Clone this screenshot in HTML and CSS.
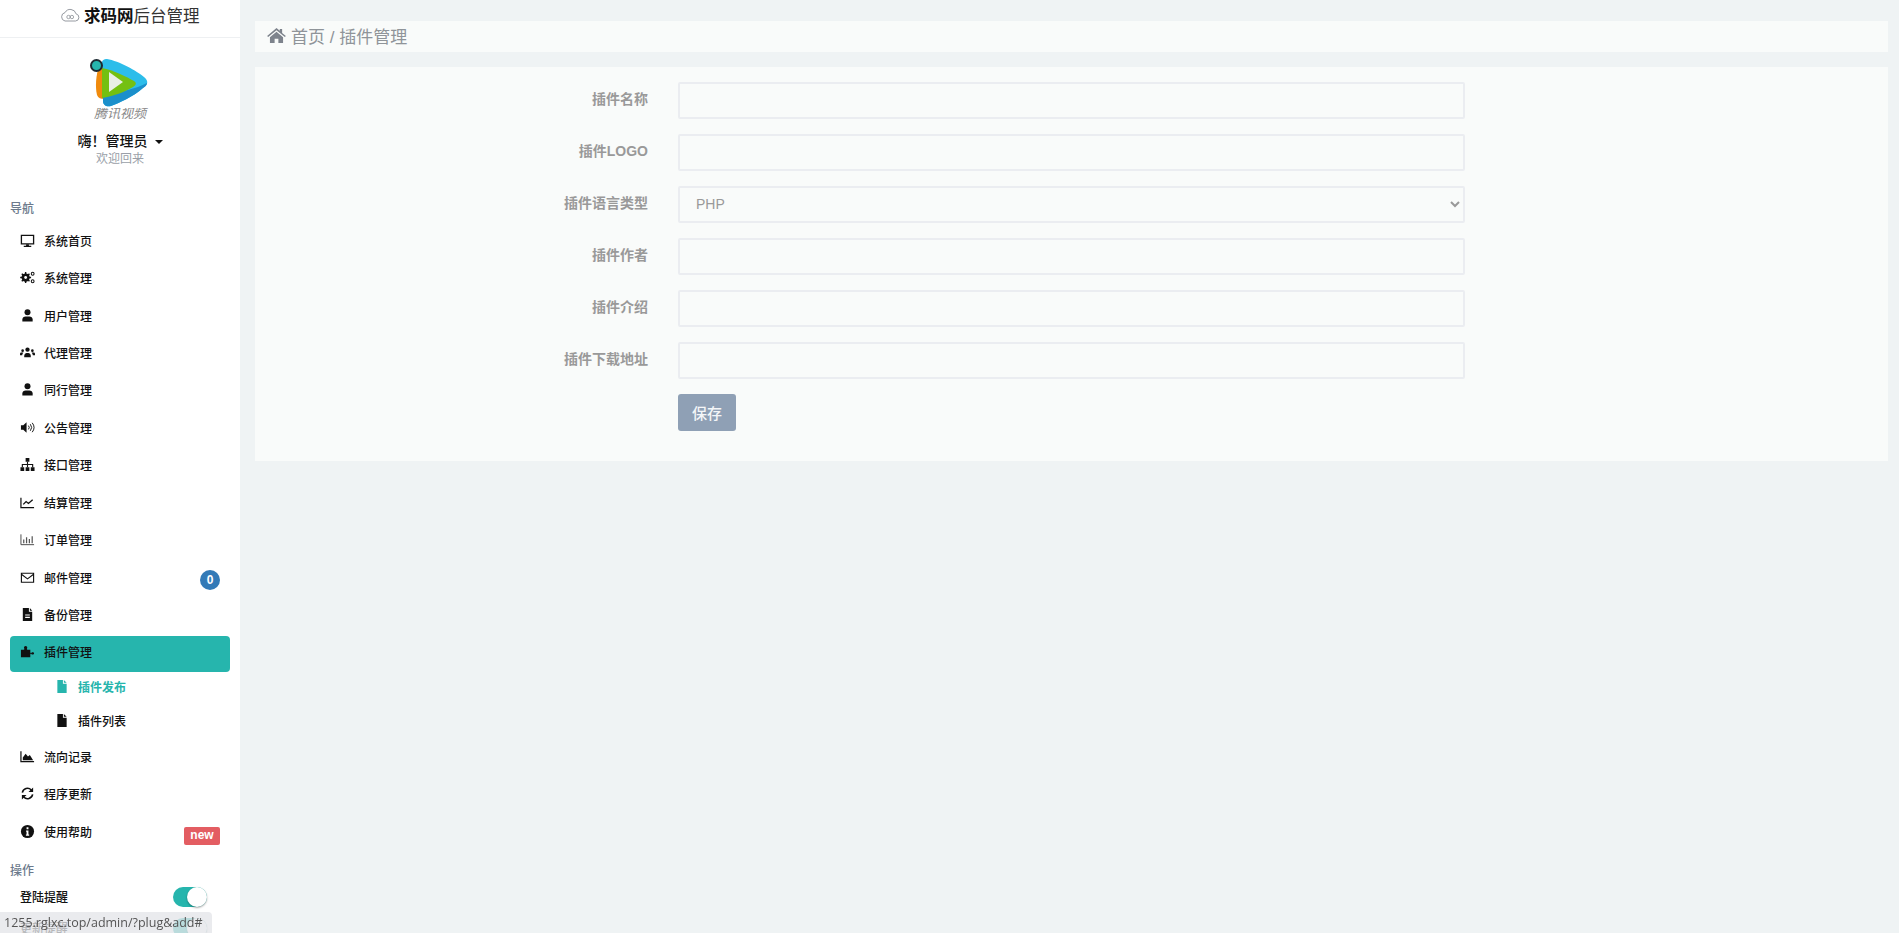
FILE: index.html
```html
<!DOCTYPE html>
<html lang="zh-CN">
<head>
    <meta charset="UTF-8">
    <title>求码网后台管理</title>
    <link rel="stylesheet" href="styles.css">
</head>
<body>

    <div class="layout">

        <!-- Sidebar -->
        <aside class="sidebar">
            <div class="brand">
                <svg class="brand-icon" viewBox="0 0 20 14"><path d="M5 13h10.500a3.600 3.600 0 0 0 .6-7.100A6 6 0 0 0 5 4.600 4.300 4.300 0 0 0 5 13z" fill="none" stroke="#8a8f96" stroke-width="0.9"/><circle cx="8.500" cy="9" r="1.700" fill="none" stroke="#8a8f96" stroke-width="0.8"/><circle cx="11.900" cy="9" r="1.700" fill="none" stroke="#8a8f96" stroke-width="0.8"/></svg>
                <b>求码网</b><span>后台管理</span>
            </div>

            <div class="profile">
                <div class="avatar">
                    <svg viewBox="0 0 62 50" class="avatar-logo">
                        <path d="M10 9C7 18 6 30 8 38c1 3 4 4 7 4L14 8z" fill="#f08a0c"/>
                        <path d="M18 2c12 2 30 12 37 18 5 4 4 8-1 11-10 9-24 15-32 18-5 1-8-1-8-5L13 6c0-3 2-4 5-4z" fill="#2cbdea"/>
                        <path d="M14 36v8c0 4 3 6 8 5 8-3 22-9 32-18 2-1 4-3 4-5-12 6-30 11-44 10z" fill="#1b8fcb"/>
                        <path d="M13 11c11 2 25 9 32 13 3 2 2 4-1 6-8 5-20 9-31 11z" fill="#74c011"/>
                        <path d="M20 15l14 10-14 10z" fill="#e9efe6"/>
                    </svg>
                    <span class="avatar-name">腾讯视频</span>
                    <span class="online-dot"></span>
                </div>
                <div class="profile-name">嗨！管理员<i class="caret"></i></div>
                <div class="profile-sub">欢迎回来</div>
            </div>

            <div class="nav-title">导航</div>
            <ul class="nav">
                <li class="nav-item"><svg class="ico" viewBox="0 0 16 16"><path d="M1.500 2.500h13v9h-13z" fill="none" stroke="#111" stroke-width="1.400"/><path d="M6.500 12h3v1.500H12V15H4v-1.500h2.500z" fill="#111"/></svg>系统首页</li>
                <li class="nav-item"><svg class="ico" viewBox="0 0 16 16"><circle cx="6" cy="8" r="3.200" fill="none" stroke="#111" stroke-width="2.400"/><path d="M6 2.200v11.600M.2 8h11.600M1.900 3.900l8.200 8.200M10.100 3.900l-8.200 8.200" stroke="#111" stroke-width="1.500"/><circle cx="6" cy="8" r="1.500" fill="#fff"/><circle cx="13.500" cy="4" r="1.500" fill="none" stroke="#111" stroke-width="1.100"/><circle cx="13.500" cy="12" r="1.500" fill="none" stroke="#111" stroke-width="1.100"/></svg>系统管理</li>
                <li class="nav-item"><svg class="ico" viewBox="0 0 16 16"><circle cx="8" cy="4.500" r="3.200" fill="#111"/><path d="M2.500 14.500v-2.200c0-2 1.600-3.300 3.500-3.300h4c1.900 0 3.500 1.300 3.500 3.300v2.200z" fill="#111"/></svg>用户管理</li>
                <li class="nav-item"><svg class="ico" viewBox="0 0 16 16"><circle cx="8" cy="5" r="2.300" fill="#111"/><path d="M4.500 13v-1.500C4.500 9.800 6 8.500 7 8.500h2c1 0 2.500 1.300 2.500 3V13z" fill="#111"/><circle cx="2.800" cy="6" r="1.400" fill="#111"/><circle cx="13.200" cy="6" r="1.400" fill="#111"/><path d="M0 11V9.500C0 8.500.8 8 1.600 8h2c-.8 1-1.300 2-1.300 3zM16 11V9.500c0-1-.8-1.500-1.600-1.500h-2c.8 1 1.300 2 1.300 3z" fill="#111"/></svg>代理管理</li>
                <li class="nav-item"><svg class="ico" viewBox="0 0 16 16"><circle cx="8" cy="4.500" r="3.200" fill="#111"/><path d="M2.500 14.500v-2.200c0-2 1.600-3.300 3.500-3.300h4c1.900 0 3.500 1.300 3.500 3.300v2.200z" fill="#111"/></svg>同行管理</li>
                <li class="nav-item"><svg class="ico" viewBox="0 0 16 16"><path d="M1 5.500h2.500L7 2.500v11l-3.500-3H1z" fill="#111"/><path d="M9 6a3 3 0 0 1 0 4M11 4.500a5.500 5.500 0 0 1 0 7M13 3a8 8 0 0 1 0 10" fill="none" stroke="#111" stroke-width="1"/></svg>公告管理</li>
                <li class="nav-item"><svg class="ico" viewBox="0 0 16 16"><path d="M6 1h4v4H6zM.5 11h4v4h-4zM6 11h4v4H6zM11.500 11h4v4h-4z" fill="#111"/><path d="M8 5v6M2.500 11V8h11v3" fill="none" stroke="#111" stroke-width="1.200"/></svg>接口管理</li>
                <li class="nav-item"><svg class="ico" viewBox="0 0 16 16"><path d="M1 3v10.500h14" fill="none" stroke="#111" stroke-width="1.300"/><path d="M3.500 10l3-3 2.500 2 4.500-4" fill="none" stroke="#111" stroke-width="1.400"/></svg>结算管理</li>
                <li class="nav-item"><svg class="ico" viewBox="0 0 16 16"><path d="M1 2.500v11h14" fill="none" stroke="#444" stroke-width="1"/><path d="M4 8v4M7 5.500V12M10 7.500V12M13 4.500V12" stroke="#555" stroke-width="1.300"/></svg>订单管理</li>
                <li class="nav-item"><svg class="ico" viewBox="0 0 16 16"><path d="M1.500 3.500h13v9.500h-13z" fill="none" stroke="#111" stroke-width="1.200"/><path d="M1.500 4.500L8 9.500l6.500-5" fill="none" stroke="#111" stroke-width="1.200"/></svg>邮件管理<span class="badge-count">0</span></li>
                <li class="nav-item"><svg class="ico" viewBox="0 0 16 16"><path d="M3 1h6.500v4H13v10H3z" fill="#111"/><path d="M10.500 1L13 4h-2.500z" fill="#111"/><path d="M5.500 8h5v1.100h-5zM5.500 10.500h5v1.100h-5z" fill="#fff"/></svg>备份管理</li>
                <li class="nav-item active"><svg class="ico" viewBox="0 0 16 16"><path d="M1 6h3c.8 0 .8-1 .4-1.500C3.800 3.500 4.800 2 6 2s2.200 1.500 1.600 2.500C7.200 5 7.200 6 8 6h3v3c0 .6.800.6 1.300.2.800-.6 2.700-.4 2.700.8s-1.900 1.400-2.700.8c-.5-.4-1.300-.4-1.300.2v3H1z" fill="#111"/></svg>插件管理</li>
                <li class="sub-item current"><svg class="ico-sub" viewBox="0 0 12 14"><path d="M1 0h6v4h4v10H1zM8 0l3 3H8z" fill="#26b5ad"/></svg>插件发布</li>
                <li class="sub-item"><svg class="ico-sub" viewBox="0 0 12 14"><path d="M1 0h6v4h4v10H1zM8 0l3 3H8z" fill="#111"/></svg>插件列表</li>
                <li class="nav-item"><svg class="ico" viewBox="0 0 16 16"><path d="M1 2.500v11h14" fill="none" stroke="#111" stroke-width="1.300"/><path d="M3 12V9l3-4 2.500 3 2-1.500L14 12z" fill="#111"/></svg>流向记录</li>
                <li class="nav-item"><svg class="ico" viewBox="0 0 16 16"><path d="M2.500 7A5.600 5.600 0 0 1 12 4.200M13.500 9A5.600 5.600 0 0 1 4 11.800" fill="none" stroke="#111" stroke-width="1.700"/><path d="M14 1.500V6.500H9zM2 14.500V9.500H7z" fill="#111"/></svg>程序更新</li>
                <li class="nav-item"><svg class="ico" viewBox="0 0 16 16"><circle cx="8" cy="8" r="7" fill="#111"/><path d="M7 3.500h2v2H7zM6.500 7H9v4.200h.8v1.300H6.300v-1.300H7V8.300h-.5z" fill="#fff"/></svg>使用帮助<span class="badge-new">new</span></li>
            </ul>

            <div class="nav-title action-title">操作</div>
            <div class="switch-row">登陆提醒<span class="switch"></span></div>
            <div class="switch-row">更新提醒<span class="switch"></span></div>
        </aside>

        <!-- Main content -->
        <main class="content">
            <div class="crumb">
                <svg class="crumb-icon" viewBox="0 0 20 16"><path d="M10 0l3.500 3V1h2.500v4.200L20 8.600l-1.100 1.100L10 2.300 1.100 9.700 0 8.600z" fill="#7d838c"/><path d="M10 4l7 5.800V16h-5v-4.500H8V16H3V9.800z" fill="#7d838c"/></svg>
                首页 / 插件管理
            </div>

            <form class="card">
                <div class="form-row"><label>插件名称</label><input type="text"></div>
                <div class="form-row"><label>插件LOGO</label><input type="text"></div>
                <div class="form-row"><label>插件语言类型</label><select><option>PHP</option></select></div>
                <div class="form-row"><label>插件作者</label><input type="text"></div>
                <div class="form-row"><label>插件介绍</label><input type="text"></div>
                <div class="form-row"><label>插件下载地址</label><input type="text"></div>
                <div class="form-row"><label></label><button type="button">保存</button></div>
            </form>
        </main>

    </div>

    <!-- Browser link preview -->
    <div class="status-bubble">1255.rglxc.top/admin/?plug&amp;add#</div>

</body>
</html>
```

FILE: styles.css
```css
/* Basic Reset and Global Styles */
* {
    box-sizing: border-box;
    margin: 0;
    padding: 0;
}

html, body {
    height: 100%;
    overflow: hidden;
}

body {
    font-family: "Liberation Sans", "Noto Sans CJK SC", sans-serif;
    background-color: #eff3f4;
    color: #111;
}

.layout {
    display: flex;
    height: 933px;
}

/* Sidebar */
.sidebar {
    width: 240px;
    flex-shrink: 0;
    height: 933px;
    overflow: hidden;
    background-color: #fff;
}

.brand {
    height: 38px;
    padding-left: 60px;
    padding-bottom: 8px;
    display: flex;
    align-items: center;
    font-size: 16.5px;
    border-bottom: 1px solid #eef0f2;
}

.brand-icon {
    width: 20px;
    height: 14px;
    margin-right: 4px;
}

.brand span {
    color: #333;
}

.profile {
    height: 161px;
    padding-top: 19px;
    text-align: center;
}

.avatar {
    position: relative;
    width: 62px;
    height: 64px;
    margin: 0 auto 10px;
    overflow: hidden;
}

.avatar-logo {
    display: block;
    width: 62px;
    height: 50px;
}

.avatar-name {
    display: block;
    height: 13px;
    margin-top: 1px;
    padding-left: 5px;
    overflow: hidden;
    font-size: 13px;
    line-height: 11px;
    font-style: italic;
    text-align: left;
    color: #8a8a8a;
    white-space: nowrap;
}

.online-dot {
    position: absolute;
    left: 1px;
    top: 2px;
    width: 13px;
    height: 13px;
    border: 2px solid #1d2b33;
    border-radius: 50%;
    background-color: #26b5ad;
}

.profile-name {
    font-size: 14px;
    line-height: 18px;
    font-weight: 500;
    padding-top: 1px;
}

.caret {
    display: inline-block;
    margin-left: 7px;
    vertical-align: 2px;
    border-top: 4px solid #111;
    border-left: 4px solid transparent;
    border-right: 4px solid transparent;
}

.profile-sub {
    font-size: 12px;
    line-height: 16px;
    padding-top: 1px;
    color: #9a9fa8;
}

.nav-title {
    height: 25px;
    line-height: 20px;
    padding-left: 10px;
    font-size: 12px;
    font-weight: 500;
    color: #6c7a8c;
}

.action-title {
    height: 20px;
    margin-top: 8px;
}

.nav {
    list-style: none;
}

.nav-item {
    height: 37.45px;
    margin: 0 10px;
    padding: 0 10px 5px;
    display: flex;
    align-items: center;
    font-size: 12px;
    font-weight: 500;
    border-radius: 4px;
}

.nav-item.active {
    height: 36px;
    margin-bottom: 1.45px;
    background-color: #26b5ad;
}

.ico {
    width: 15px;
    height: 15px;
    margin-right: 9px;
    flex-shrink: 0;
}

.sub-item {
    height: 33.5px;
    padding-left: 56px;
    padding-bottom: 7px;
    display: flex;
    align-items: center;
    font-size: 12px;
    font-weight: 500;
}

.sub-item.current {
    color: #26b5ad;
    font-weight: 700;
}

.ico-sub {
    width: 12px;
    height: 13px;
    margin-right: 10px;
}

.badge-count {
    margin-left: auto;
    margin-top: 5px;
    width: 20px;
    height: 20px;
    line-height: 20px;
    border-radius: 50%;
    text-align: center;
    font-size: 12px;
    font-weight: 700;
    color: #fff;
    background-color: #337ab7;
}

.badge-new {
    margin-left: auto;
    margin-top: 9px;
    width: 36px;
    height: 18px;
    line-height: 17px;
    border-radius: 2px;
    text-align: center;
    font-size: 12px;
    font-weight: 700;
    color: #fff;
    background-color: #e35d62;
}

.switch-row {
    height: 31px;
    padding: 0 33px 0 20px;
    display: flex;
    align-items: center;
    justify-content: space-between;
    font-size: 12px;
    font-weight: 500;
}

.switch {
    position: relative;
    width: 34px;
    height: 20px;
    margin-top: 1px;
    border-radius: 10px;
    background-color: #26b5ad;
}

.switch::after {
    content: "";
    position: absolute;
    right: 0;
    top: 0;
    width: 20px;
    height: 20px;
    border-radius: 50%;
    background-color: #fff;
    box-shadow: 0 1px 2px rgba(0, 0, 0, 0.35);
}

/* Main content */
.content {
    flex: 1;
    padding: 21px 11px 0 15px;
}

.crumb {
    height: 31px;
    padding-left: 12px;
    padding-bottom: 2px;
    display: flex;
    align-items: center;
    gap: 5px;
    margin-bottom: 15px;
    font-size: 17px;
    color: #8f9499;
    background-color: #f9fbfa;
}

.crumb-icon {
    width: 19px;
    height: 15px;
}

.card {
    height: 394px;
    padding-top: 15px;
    background-color: #f9fbfa;
}

.form-row {
    display: flex;
    align-items: center;
    height: 37px;
    margin-bottom: 15px;
}

.form-row label {
    width: 393px;
    padding-bottom: 5px;
    text-align: right;
    margin-right: 30px;
    font-size: 14px;
    font-weight: 700;
    color: #999;
}

.form-row input,
.form-row select {
    width: 787px;
    height: 37px;
    padding: 0 12px;
    border: 2px solid #ebedf1;
    border-radius: 2px;
    background-color: transparent;
    font-family: inherit;
    font-size: 14px;
    color: #999;
    outline: none;
}

.form-row select {
    padding-bottom: 2px;
}

.form-row button {
    width: 58px;
    height: 37px;
    border: none;
    border-radius: 3px;
    background-color: #8fa0b5;
    color: #f4f6f8;
    font-family: inherit;
    font-size: 15px;
    font-weight: 500;
}

/* Link preview over the page corner */
.status-bubble {
    position: fixed;
    left: 0;
    bottom: 0;
    width: 212px;
    height: 21px;
    padding-left: 4px;
    line-height: 21px;
    font-family: "Open Sans", sans-serif;
    font-size: 12.5px;
    white-space: nowrap;
    color: #555;
    background-color: rgba(228, 230, 233, 0.78);
    border-top-right-radius: 4px;
}
```
